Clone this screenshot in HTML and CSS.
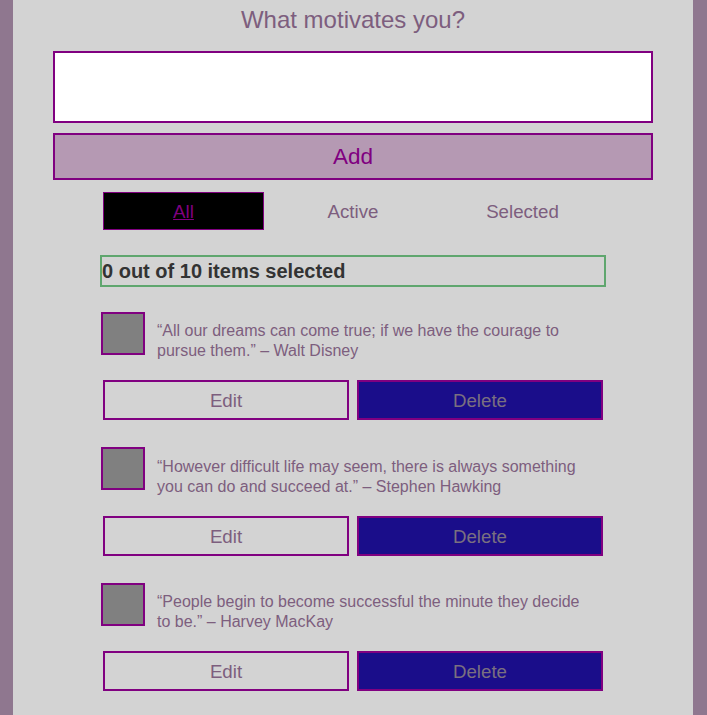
FILE: index.html
```html
<!DOCTYPE html>
<html lang="en">
<head>
<meta charset="utf-8">
<title>What motivates you?</title>
<link rel="stylesheet" href="styles.css">
</head>
<body>
<div class="app">
  <h1 class="title">What motivates you?</h1>
  <input class="new-input" type="text" aria-label="New motivation">
  <button class="add-btn" type="button">Add</button>

  <div class="filters">
    <button class="tab tab-active" type="button"><span class="tab-link">All</span></button>
    <button class="tab" type="button">Active</button>
    <button class="tab" type="button">Selected</button>
  </div>

  <p class="status">0 out of 10 items selected</p>

  <ul class="items">
    <li class="item">
      <div class="item-main">
        <span class="checkbox"></span>
        <p class="quote">“All our dreams can come true; if we have the courage to pursue them.” – Walt Disney</p>
      </div>
      <div class="item-actions">
        <button class="btn btn-edit" type="button">Edit</button>
        <button class="btn btn-delete" type="button">Delete</button>
      </div>
    </li>
    <li class="item">
      <div class="item-main">
        <span class="checkbox"></span>
        <p class="quote">“However difficult life may seem, there is always something you can do and succeed at.” – Stephen Hawking</p>
      </div>
      <div class="item-actions">
        <button class="btn btn-edit" type="button">Edit</button>
        <button class="btn btn-delete" type="button">Delete</button>
      </div>
    </li>
    <li class="item">
      <div class="item-main">
        <span class="checkbox"></span>
        <p class="quote">“People begin to become successful the minute they decide to be.” – Harvey MacKay</p>
      </div>
      <div class="item-actions">
        <button class="btn btn-edit" type="button">Edit</button>
        <button class="btn btn-delete" type="button">Delete</button>
      </div>
    </li>
  </ul>
</div>
</body>
</html>
```

FILE: styles.css
```css
* {
  box-sizing: border-box;
}

html, body {
  margin: 0;
  padding: 0;
}

body {
  background: #8f778f;
  font-family: "Liberation Sans", Arial, sans-serif;
  color: #7d5e7e;
}

.app {
  width: 680px;
  min-height: 100vh;
  margin: 0 13px;
  background: #d3d3d3;
  padding: 6px 40px 20px;
  display: flex;
  flex-direction: column;
}

.title {
  margin: 0;
  font-size: 24px;
  line-height: 28px;
  font-weight: normal;
  text-align: center;
  color: #7d5e7e;
}

.new-input {
  display: block;
  width: 600px;
  height: 72px;
  margin: 17px 0 0;
  border: 2px solid #800080;
  background: #fff;
  padding: 0 8px;
  font: inherit;
  outline: none;
}

.add-btn {
  display: block;
  width: 600px;
  height: 47px;
  margin: 10px 0 0;
  border: 2px solid #800080;
  background: #b599b3;
  color: #800080;
  font-family: inherit;
  font-size: 22.5px;
  padding: 1px 0 0;
}

.filters {
  width: 500px;
  margin: 12px auto 0;
  display: flex;
  justify-content: space-between;
}

.tab {
  width: 161px;
  height: 38px;
  border: 1px solid transparent;
  background: transparent;
  color: #7d5e7e;
  font-family: inherit;
  font-size: 18.7px;
  padding: 2px 0 0;
}

.tab-active {
  background: #000;
  border-color: #800080;
}

.tab-link {
  color: #800080;
  text-decoration: underline;
}

.status {
  width: 506px;
  height: 32px;
  margin: 25px auto 0;
  border: 2px solid #5fa66e;
  padding: 0;
  font-size: 20px;
  line-height: 28px;
  font-weight: bold;
  color: #333;
}

.items {
  list-style: none;
  width: 506px;
  margin: 0 auto;
  padding: 0;
}

.item {
  margin-top: 24.7px;
}

.item + .item {
  margin-top: 27px;
}

.item-main {
  display: flex;
  align-items: flex-start;
}

.checkbox {
  flex: none;
  width: 44px;
  height: 43px;
  margin-left: 1px;
  border: 2px solid #800080;
  background: #808080;
}

.quote {
  flex: 1;
  margin: 9.5px 0 0 12px;
  padding-right: 16px;
  font-size: 16px;
  line-height: 20px;
  color: #7d5e7e;
}

.item-actions {
  display: flex;
  gap: 8px;
  padding: 0 3px;
  margin-top: 19px;
}

.btn {
  flex: 1;
  height: 40px;
  border: 2px solid #800080;
  font-family: inherit;
  font-size: 18.7px;
  padding: 2px 0 0;
}

.btn-edit {
  background: transparent;
  color: #7d5e7e;
}

.btn-delete {
  background: #1a0d8a;
  color: #7a7080;
}
```
